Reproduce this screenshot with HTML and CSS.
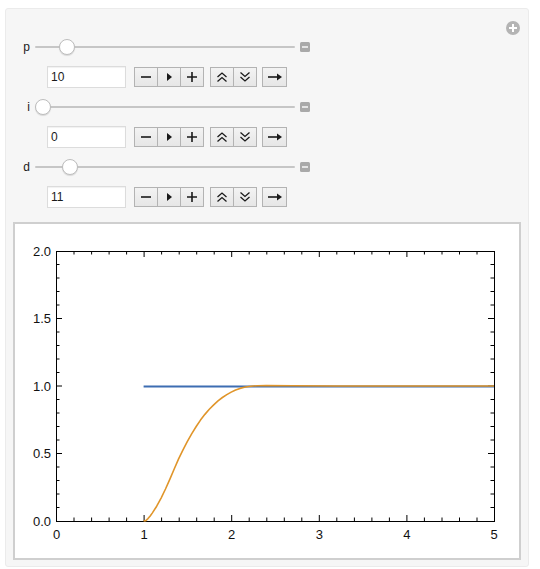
FILE: index.html
```html
<!DOCTYPE html>
<html>
<head>
<meta charset="utf-8">
<link rel="stylesheet" href="styles.css">
</head>
<body>
<div class="panel">
  <div class="topbar">
    <svg class="plus-icon" width="14" height="14" viewBox="0 0 14 14"><circle cx="7" cy="7" r="7" fill="#b4b4b4"/><path d="M7 3v8M3 7h8" stroke="#fff" stroke-width="2"/></svg>
  </div>

  <div class="control">
    <div class="slider-row">
      <span class="var-label">p</span>
      <div class="track"><div class="thumb" style="left:24px"></div></div>
      <span class="close-box"></span>
    </div>
    <div class="input-row">
      <div class="field">10</div>
      <div class="btn-group g1">
        <span class="btn"><svg width="12" height="12" viewBox="0 0 12 12"><path d="M1 6h10" stroke="#1a1a1a" stroke-width="1.6"/></svg></span>
        <span class="btn"><svg width="12" height="12" viewBox="0 0 12 12"><path d="M4 2l5 4-5 4z" fill="#1a1a1a"/></svg></span>
        <span class="btn"><svg width="12" height="12" viewBox="0 0 12 12"><path d="M1 6h10M6 1v10" stroke="#1a1a1a" stroke-width="1.6"/></svg></span>
      </div>
      <div class="btn-group g2">
        <span class="btn"><svg width="12" height="12" viewBox="0 0 12 12"><path d="M1.5 6l4.5-4 4.5 4M1.5 10.5l4.5-4 4.5 4" fill="none" stroke="#1a1a1a" stroke-width="1.3"/></svg></span>
        <span class="btn"><svg width="12" height="12" viewBox="0 0 12 12"><path d="M1.5 1.5l4.5 4 4.5-4M1.5 6l4.5 4 4.5-4" fill="none" stroke="#1a1a1a" stroke-width="1.3"/></svg></span>
      </div>
      <div class="btn-group g3">
        <span class="btn"><svg width="16" height="12" viewBox="0 0 16 12"><path d="M1 6h10" stroke="#1a1a1a" stroke-width="1.6"/><path d="M10 2.5l5 3.5-5 3.5z" fill="#1a1a1a"/></svg></span>
      </div>
    </div>
  </div>

  <div class="control">
    <div class="slider-row">
      <span class="var-label">i</span>
      <div class="track"><div class="thumb" style="left:0px"></div></div>
      <span class="close-box"></span>
    </div>
    <div class="input-row">
      <div class="field">0</div>
      <div class="btn-group g1">
        <span class="btn"><svg width="12" height="12" viewBox="0 0 12 12"><path d="M1 6h10" stroke="#1a1a1a" stroke-width="1.6"/></svg></span>
        <span class="btn"><svg width="12" height="12" viewBox="0 0 12 12"><path d="M4 2l5 4-5 4z" fill="#1a1a1a"/></svg></span>
        <span class="btn"><svg width="12" height="12" viewBox="0 0 12 12"><path d="M1 6h10M6 1v10" stroke="#1a1a1a" stroke-width="1.6"/></svg></span>
      </div>
      <div class="btn-group g2">
        <span class="btn"><svg width="12" height="12" viewBox="0 0 12 12"><path d="M1.5 6l4.5-4 4.5 4M1.5 10.5l4.5-4 4.5 4" fill="none" stroke="#1a1a1a" stroke-width="1.3"/></svg></span>
        <span class="btn"><svg width="12" height="12" viewBox="0 0 12 12"><path d="M1.5 1.5l4.5 4 4.5-4M1.5 6l4.5 4 4.5-4" fill="none" stroke="#1a1a1a" stroke-width="1.3"/></svg></span>
      </div>
      <div class="btn-group g3">
        <span class="btn"><svg width="16" height="12" viewBox="0 0 16 12"><path d="M1 6h10" stroke="#1a1a1a" stroke-width="1.6"/><path d="M10 2.5l5 3.5-5 3.5z" fill="#1a1a1a"/></svg></span>
      </div>
    </div>
  </div>

  <div class="control">
    <div class="slider-row">
      <span class="var-label">d</span>
      <div class="track"><div class="thumb" style="left:27px"></div></div>
      <span class="close-box"></span>
    </div>
    <div class="input-row">
      <div class="field">11</div>
      <div class="btn-group g1">
        <span class="btn"><svg width="12" height="12" viewBox="0 0 12 12"><path d="M1 6h10" stroke="#1a1a1a" stroke-width="1.6"/></svg></span>
        <span class="btn"><svg width="12" height="12" viewBox="0 0 12 12"><path d="M4 2l5 4-5 4z" fill="#1a1a1a"/></svg></span>
        <span class="btn"><svg width="12" height="12" viewBox="0 0 12 12"><path d="M1 6h10M6 1v10" stroke="#1a1a1a" stroke-width="1.6"/></svg></span>
      </div>
      <div class="btn-group g2">
        <span class="btn"><svg width="12" height="12" viewBox="0 0 12 12"><path d="M1.5 6l4.5-4 4.5 4M1.5 10.5l4.5-4 4.5 4" fill="none" stroke="#1a1a1a" stroke-width="1.3"/></svg></span>
        <span class="btn"><svg width="12" height="12" viewBox="0 0 12 12"><path d="M1.5 1.5l4.5 4 4.5-4M1.5 6l4.5 4 4.5-4" fill="none" stroke="#1a1a1a" stroke-width="1.3"/></svg></span>
      </div>
      <div class="btn-group g3">
        <span class="btn"><svg width="16" height="12" viewBox="0 0 16 12"><path d="M1 6h10" stroke="#1a1a1a" stroke-width="1.6"/><path d="M10 2.5l5 3.5-5 3.5z" fill="#1a1a1a"/></svg></span>
      </div>
    </div>
  </div>

  <div class="plot-frame">
    <svg class="plot" width="504" height="334" viewBox="0 0 504 334">
      <g stroke="#000" stroke-width="1" fill="none">
        <rect x="41.5" y="27.5" width="438" height="270"/>
        <path d="M41.5 297v-6M129.1 297v-6M216.7 297v-6M304.3 297v-6M391.9 297v-6M41.5 27v6M129.1 27v6M216.7 27v6M304.3 27v6M391.9 27v6"/>
        <path d="M59 297v-3.5M76.6 297v-3.5M94.1 297v-3.5M111.6 297v-3.5M146.6 297v-3.5M164.2 297v-3.5M181.7 297v-3.5M199.2 297v-3.5M234.2 297v-3.5M251.8 297v-3.5M269.3 297v-3.5M286.8 297v-3.5M321.8 297v-3.5M339.4 297v-3.5M356.9 297v-3.5M374.4 297v-3.5M409.4 297v-3.5M427 297v-3.5M444.5 297v-3.5M462 297v-3.5"/>
        <path d="M59 27v3.5M76.6 27v3.5M94.1 27v3.5M111.6 27v3.5M146.6 27v3.5M164.2 27v3.5M181.7 27v3.5M199.2 27v3.5M234.2 27v3.5M251.8 27v3.5M269.3 27v3.5M286.8 27v3.5M321.8 27v3.5M339.4 27v3.5M356.9 27v3.5M374.4 27v3.5M409.4 27v3.5M427 27v3.5M444.5 27v3.5M462 27v3.5"/>
        <path d="M41 229.5h6M41 162h6M41 94.5h6M479 229.5h-6M479 162h-6M479 94.5h-6"/>
        <path d="M41 283.5h3.5M41 270h3.5M41 256.5h3.5M41 243h3.5M41 216h3.5M41 202.5h3.5M41 189h3.5M41 175.5h3.5M41 148.5h3.5M41 135h3.5M41 121.5h3.5M41 108h3.5M41 81h3.5M41 67.5h3.5M41 54h3.5M41 40.5h3.5"/>
        <path d="M479 283.5h-3.5M479 270h-3.5M479 256.5h-3.5M479 243h-3.5M479 216h-3.5M479 202.5h-3.5M479 189h-3.5M479 175.5h-3.5M479 148.5h-3.5M479 135h-3.5M479 121.5h-3.5M479 108h-3.5M479 81h-3.5M479 67.5h-3.5M479 54h-3.5M479 40.5h-3.5"/>
      </g>
      <path d="M128.6 162.5H479" stroke="#3d6db2" stroke-width="1.8" fill="none"/>
      <polyline points="128.6,297 130.8,296.6 133,294.6 135.2,292 137.4,288.9 141.7,282.2 146.1,274.05 150.5,265 154.9,255.15 159.2,245 163.6,234.9 168,225.8 172.4,217.35 176.8,209.6 181.2,202.5 185.5,196.1 189.9,190.35 194.3,185.3 198.7,180.9 203,176.9 207.4,173.5 211.8,170.6 216.2,168.1 220.6,166 225,164.4 229.4,163.3 233.7,162.5 238.1,162 242.5,161.7 251.3,161.6 277.5,161.7 321.3,162 479,162" fill="none" stroke="#e0952a" stroke-width="1.6" stroke-linejoin="round"/>
      <g class="tick-label" text-anchor="end">
        <text x="36" y="32">2.0</text>
        <text x="36" y="99">1.5</text>
        <text x="36" y="166.5">1.0</text>
        <text x="36" y="234">0.5</text>
        <text x="36" y="301.5">0.0</text>
      </g>
      <g class="tick-label" text-anchor="middle">
        <text x="41.5" y="315">0</text>
        <text x="129.1" y="315">1</text>
        <text x="216.7" y="315">2</text>
        <text x="304.3" y="315">3</text>
        <text x="391.9" y="315">4</text>
        <text x="479" y="315">5</text>
      </g>
    </svg>
  </div>
</div>
</body>
</html>
```

FILE: styles.css
```css
html, body {
  margin: 0;
  padding: 0;
  background: #ffffff;
}

body {
  font-family: "Liberation Sans", Arial, sans-serif;
  color: #1a1a1a;
}

.panel {
  margin: 8px 0 0 5px;
  width: 524px;
  height: 559px;
  box-sizing: border-box;
  background: #f6f6f6;
  border: 1px solid #ebebeb;
  border-radius: 3px;
  display: flex;
  flex-direction: column;
}

.topbar {
  height: 30px;
  box-sizing: border-box;
  padding: 12px 8px 0 0;
  display: flex;
  justify-content: flex-end;
  align-items: flex-start;
}

.plus-icon {
  display: block;
}

.control + .control {
  margin-top: 11px;
}

.slider-row {
  display: flex;
  align-items: center;
  height: 16px;
}

.var-label {
  width: 24px;
  text-align: right;
  font-size: 12px;
  line-height: 16px;
}

.track {
  position: relative;
  width: 260px;
  height: 16px;
  margin-left: 5px;
}

.track::before {
  content: "";
  position: absolute;
  left: 0;
  right: 0;
  top: 7px;
  height: 2px;
  border-radius: 1px;
  background: #c6c6c6;
}

.thumb {
  position: absolute;
  top: 0;
  width: 16px;
  height: 16px;
  box-sizing: border-box;
  border-radius: 50%;
  background: #ffffff;
  border: 1px solid #bdbdbd;
  box-shadow: 0 1px 1px rgba(0, 0, 0, 0.12);
}

.close-box {
  position: relative;
  width: 10px;
  height: 10px;
  margin-left: 5px;
  border-radius: 1.5px;
  background: #a9a9a9;
}

.close-box::after {
  content: "";
  position: absolute;
  left: 2px;
  right: 2px;
  top: 4px;
  height: 2px;
  background: #e4e4e4;
}

.input-row {
  display: flex;
  align-items: center;
  height: 22px;
  margin-top: 11px;
  padding-left: 41px;
}

.field {
  width: 79px;
  height: 22px;
  box-sizing: border-box;
  background: #ffffff;
  border: 1px solid #dcdcdc;
  box-shadow: inset 0 1px 1px rgba(0, 0, 0, 0.06);
  font-size: 12px;
  line-height: 20px;
  padding-left: 3px;
}

.btn-group {
  display: flex;
  height: 20px;
  box-sizing: border-box;
  border: 1px solid #b3b3b3;
  background: linear-gradient(#f3f3f3, #e6e6e6);
}

.g1 { margin-left: 8px; }
.g2 { margin-left: 6px; }
.g3 { margin-left: 5px; }

.btn {
  width: 22px;
  display: flex;
  align-items: center;
  justify-content: center;
}

.btn + .btn {
  border-left: 1px solid #b3b3b3;
}

.g3 .btn {
  width: 23px;
}

.plot-frame {
  margin: 14px 0 0 7px;
  width: 508px;
  height: 338px;
  box-sizing: border-box;
  background: #ffffff;
  border: 2px solid #cfcfcf;
}

.plot {
  display: block;
}

.tick-label text {
  font-family: "Liberation Sans", Arial, sans-serif;
  font-size: 13px;
  fill: #111;
}
```
